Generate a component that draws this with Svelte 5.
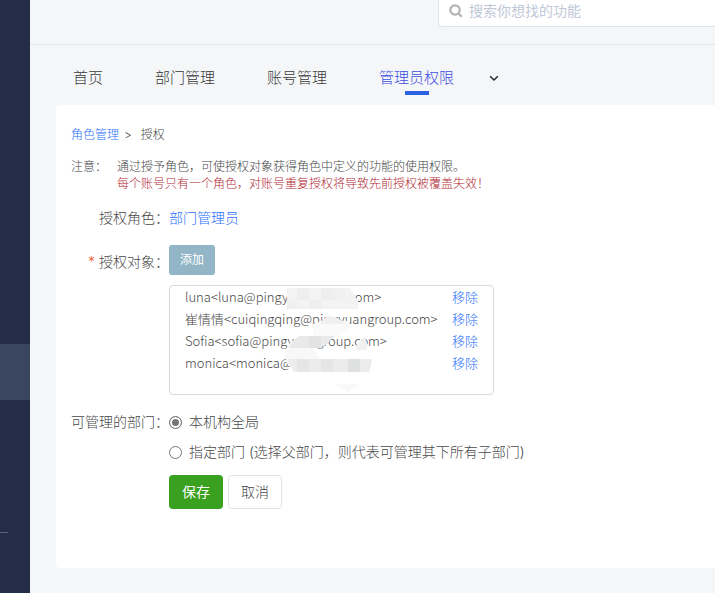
<script>
    let keyword = '';
    let scope = 'all';
    let activeTab = '管理员权限';

    const tabs = ['首页', '部门管理', '账号管理', '管理员权限'];

    let members = [
        { name: 'luna', email: 'luna@pingyuangroup.com' },
        { name: '崔情情', email: 'cuiqingqing@pingyuangroup.com' },
        { name: 'Sofia', email: 'sofia@pingyuangroup.com' },
        { name: 'monica', email: 'monica@pingyu' }
    ];

    function remove(member) {
        members = members.filter((m) => m !== member);
    }
</script>

<div class="layout">
    <aside class="sidebar">
        <div class="current"></div>
        <div class="divider"></div>
    </aside>

    <div class="main">
        <header class="header">
            <label class="search">
                <svg viewBox="0 0 14 14" width="14" height="14" aria-hidden="true">
                    <circle cx="6" cy="6" r="4.7" />
                    <path d="M9.4 9.4 L12.8 12.8" />
                </svg>
                <input type="text" aria-label="搜索" placeholder="搜索你想找的功能" bind:value={keyword} />
            </label>
        </header>

        <nav class="tabs">
            {#each tabs as tab}
                <button type="button" class="tab" class:active={tab === activeTab} on:click={() => (activeTab = tab)}>
                    {tab}
                </button>
            {/each}
            <button type="button" class="more" aria-label="更多">
                <svg viewBox="0 0 10 10" width="10" height="10" aria-hidden="true">
                    <path d="M1.2 3.2 L5 7 L8.8 3.2" />
                </svg>
            </button>
        </nav>

        <section class="card">
            <div class="crumbs">
                <a href="#roles">角色管理</a>
                <span class="sep">&gt;</span>
                <span>授权</span>
            </div>

            <div class="notice">
                <span>注意：</span>
                <div>
                    <p>通过授予角色，可使授权对象获得角色中定义的功能的使用权限。</p>
                    <p class="warn">每个账号只有一个角色，对账号重复授权将导致先前授权被覆盖失效！</p>
                </div>
            </div>

            <form class="form" on:submit|preventDefault>
                <span class="label">授权角色：</span>
                <div class="role"><a href="#role">部门管理员</a></div>

                <span class="label target"><span class="star">*</span> 授权对象：</span>
                <div class="members">
                    <button type="button" class="add">添加</button>
                    <div class="list">
                        <ul>
                            {#each members as member}
                                <li>
                                    <span class="member">{member.name}&lt;{member.email}{member.name === 'monica' ? '' : '>'}</span>
                                    <button type="button" class="remove" on:click={() => remove(member)}>移除</button>
                                </li>
                            {/each}
                        </ul>
                        <!-- mosaic over the private part of the addresses -->
                        <svg class="mosaic" viewBox="0 0 96 108" width="96" height="108" aria-hidden="true">
                            <path fill="#f3f3f3" d="M3 2H66L70 9L74 15V23H3Z" />
                            <path fill="#eeeeef" d="M13 2H25V14H13ZM37 2H49V14H37ZM25 14H37V23H25Z" />
                            <path fill="#f0f0f1" d="M3 14H13V23H3ZM49 2H61V14H49Z" />
                            <path fill="#fafafa" d="M29 38L37 35H66L64 44L54 51H29Z" />
                            <path fill="#f0f0f1" d="M37 35L44 30L52 31L62 38H37Z" />
                            <path fill="#f8f8f9" d="M1 64L8 55L18 50L28 62L36 73L36 86H10L2 76Z" />
                            <path fill="#e9e9ea" d="M15 50H51L43 58L36 62H5L9 55Z" />
                            <path fill="#e3e3e4" d="M25 50H37V62H25Z" />
                            <path fill="#f1f1f2" d="M72 60L81 51L83 58V64H72Z" />
                            <path fill="#ececed" d="M4 73H88L87 80L85 86H11L4 77Z" />
                            <path fill="#e6e6e7" d="M13 73H25V86H13ZM37 73H49V86H37Z" />
                            <path fill="#dfe1e1" d="M64 73H76V86H64Z" />
                            <path fill="#f9f9f9" d="M51 98H76L64 106Z" />
                        </svg>
                    </div>
                </div>

                <span class="label">可管理的部门：</span>
                <div class="scope">
                    <label>
                        <input type="radio" name="scope" value="all" bind:group={scope} />
                        本机构全局
                    </label>
                    <label>
                        <input type="radio" name="scope" value="part" bind:group={scope} />
                        指定部门 (选择父部门，则代表可管理其下所有子部门)
                    </label>
                    <div class="actions">
                        <button type="submit" class="save">保存</button>
                        <button type="button" class="cancel">取消</button>
                    </div>
                </div>
            </form>
        </section>
    </div>
</div>

<style>
    :global(body) {
        margin: 0;
    }
    .layout {
        display: flex;
        min-height: 100vh;
        overflow: hidden;
        background: #f4f6f8;
        color: #484848;
        font-family: Inter, "Noto Sans CJK SC", sans-serif;
        font-weight: 300;
        font-size: 14px;
        line-height: 20px;
    }
    button,
    input {
        font: inherit;
        margin: 0;
    }
    button {
        padding: 0;
        border: none;
        background: none;
        cursor: pointer;
    }
    a {
        color: #2b70fb;
        text-decoration: none;
    }
    p {
        margin: 0;
    }
    .sidebar {
        flex: none;
        width: 30px;
        padding-top: 344px;
        box-sizing: border-box;
        background: #232d47;
    }
    .current {
        height: 56px;
        background: #3a465e;
    }
    .divider {
        width: 8px;
        height: 1px;
        margin-top: 132px;
        background: #5b647a;
    }
    .main {
        flex: 1;
        min-width: 0;
        display: flex;
        flex-direction: column;
    }
    .header {
        display: flex;
        height: 44px;
        padding-left: 408px;
        border-bottom: 1px solid #dfe3ea;
    }
    .search {
        flex: 1;
        display: flex;
        align-items: center;
        gap: 6px;
        height: 27px;
        padding: 0 0 4px 10px;
        box-sizing: border-box;
        border: 1px solid #dfe3ea;
        border-width: 0 0 1px 1px;
        border-radius: 0 0 0 4px;
        background: #fff;
    }
    .search svg {
        flex: none;
        fill: none;
        stroke: #b3b3b3;
        stroke-width: 2.2;
    }
    .search input {
        flex: 1;
        min-width: 0;
        padding: 0;
        border: none;
        outline: none;
        background: none;
        font-weight: 400;
    }
    .search input::placeholder {
        color: #c0c8d8;
        opacity: 1;
    }
    .tabs {
        display: flex;
        gap: 52px;
        height: 60px;
        padding-left: 43px;
    }
    .tab {
        position: relative;
        height: 50px;
        padding-top: 16px;
        box-sizing: border-box;
        color: #3a3a3a;
        font-size: 15px;
        line-height: 34px;
        white-space: nowrap;
        display: flex;
        align-items: center;
    }
    .tab.active {
        color: #3f4fe0;
    }
    .tab.active::after {
        content: "";
        position: absolute;
        left: calc(50% - 12px);
        bottom: 0;
        width: 24px;
        height: 4px;
        background: #2b62e3;
    }
    .more {
        display: flex;
        align-items: center;
        height: 50px;
        padding-top: 16px;
        margin-left: -17px;
        box-sizing: border-box;
    }
    .more svg {
        fill: none;
        stroke: #222;
        stroke-width: 1.4;
    }
    .card {
        flex: 1;
        margin: 0 0 25px 26px;
        padding: 20px 15px 24px;
        border-radius: 4px 0 0 4px;
        background: #fff;
    }
    .crumbs {
        display: flex;
        font-size: 12px;
    }
    .sep {
        margin: 0 9px 0 5px;
    }
    .notice {
        display: flex;
        gap: 10px;
        margin-top: 13px;
        font-size: 12px;
        line-height: 17px;
    }
    .warn {
        color: #b02a34;
    }
    .form {
        display: grid;
        grid-template-columns: 98px 1fr;
        margin-top: 16px;
    }
    .label {
        text-align: right;
        white-space: nowrap;
    }
    .target {
        padding-top: 24px;
    }
    .star {
        color: #f5593d;
    }
    .members {
        padding-top: 17px;
    }
    .add {
        display: block;
        width: 46px;
        height: 30px;
        border-radius: 3px;
        background: #92b6c5;
        color: #fff;
        font-size: 12px;
        font-weight: 400;
    }
    .list {
        position: relative;
        max-width: 325px;
        height: 110px;
        margin: 10px 0 17px;
        padding: 0 15px;
        box-sizing: border-box;
        border: 1px solid #d9d9d9;
        border-radius: 4px;
        font-size: 13px;
        line-height: 22px;
    }
    ul {
        margin: 0;
        padding: 0;
        list-style: none;
    }
    li {
        display: flex;
        justify-content: space-between;
        white-space: nowrap;
    }
    .member {
        font-family: "Noto Sans CJK SC", sans-serif;
    }
    .remove {
        color: #2b70fb;
    }
    .mosaic {
        position: absolute;
        left: 114px;
        top: 0;
    }
    .scope label {
        display: flex;
        align-items: center;
        gap: 7px;
        margin-bottom: 10px;
    }
    .scope input {
        width: 13px;
        height: 13px;
        flex: none;
        box-sizing: border-box;
        appearance: none;
        border: 1px solid #767676;
        border-radius: 50%;
        background: #fff;
    }
    .scope input:checked {
        background: #767676;
        box-shadow: inset 0 0 0 2px #fff;
    }
    .actions {
        display: flex;
        gap: 5px;
        margin-top: 13px;
    }
    .actions button {
        width: 54px;
        height: 34px;
        box-sizing: border-box;
        border-radius: 4px;
    }
    .actions .save {
        background: #3aa01f;
        color: #fff;
        font-weight: 400;
    }
    .actions .cancel {
        border: 1px solid #dfe3ea;
        background: #fff;
        color: #484848;
    }
</style>
